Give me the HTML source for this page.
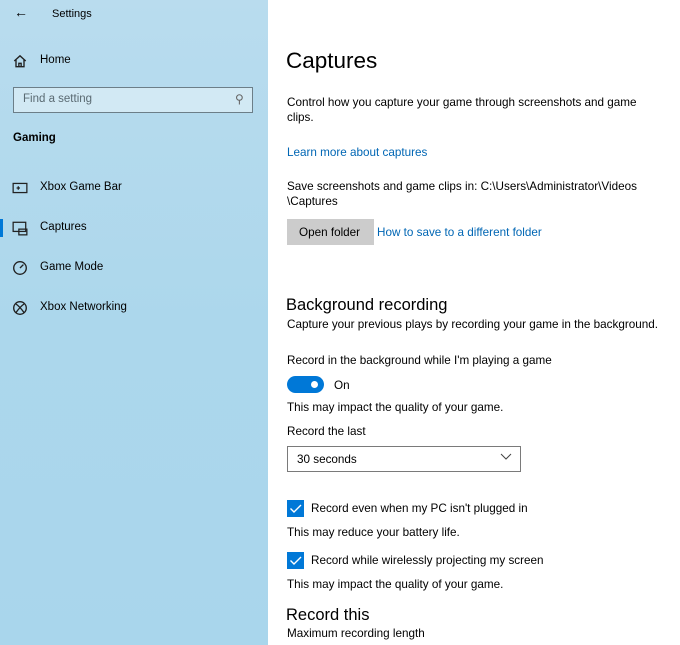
<!DOCTYPE html>
<html><head><style>
body{margin:0;width:680px;height:645px;overflow:hidden;font-family:"Liberation Sans",sans-serif;background:#fff;position:relative;color:#000}
.side{position:absolute;left:0;top:0;width:268px;height:645px;background:linear-gradient(180deg,#b9dcee 0%,#acd7ec 50%,#a9d6ec 100%)}
.t{position:absolute;white-space:nowrap}
.s{font-size:11.7px}
.side .t{font-size:11.5px}
a{color:#0066b4;text-decoration:none}
.ic{position:absolute;left:12px;width:16px;height:16px}
</style></head><body>
<div class="side">
<div class="t" style="left:14px;top:4px;font-size:14px">&#8592;</div>
<div class="t" style="left:52px;top:8px;font-size:11px">Settings</div>
<svg class="ic" style="top:53px" viewBox="0 0 14 14" fill="none" stroke="#222" stroke-width="1.2"><path d="M2 7L7 2.5 12 7M3.5 6v6h7V6M6 12V9h2v3"/></svg>
<div class="t" style="left:40px;top:54px">Home</div>
<div style="position:absolute;left:13px;top:87px;width:238px;height:24px;border:1.5px solid #6c7e88;background:#d2e9f4"></div>
<div class="t" style="left:23px;top:93px;color:#5a6a72">Find a setting</div>
<div class="t" style="left:235px;top:92px;color:#666;font-size:12px">&#9906;</div>
<div class="t" style="left:13px;top:132px;font-weight:bold">Gaming</div>
<svg class="ic" style="top:180px" viewBox="0 0 14 14" fill="none" stroke="#222" stroke-width="1.1"><rect x="1" y="3" width="12" height="8"/><path d="M4 7h3M5.5 5.5v3"/></svg>
<div class="t" style="left:40px;top:181px">Xbox Game Bar</div>
<div style="position:absolute;left:0;top:219px;width:3px;height:18px;background:#0078d7"></div>
<svg class="ic" style="top:220px" viewBox="0 0 14 14" fill="none" stroke="#222" stroke-width="1.1"><rect x="1" y="2" width="11" height="8"/><rect x="6" y="8" width="7" height="5"/></svg>
<div class="t" style="left:40px;top:221px">Captures</div>
<svg class="ic" style="top:260px" viewBox="0 0 14 14" fill="none" stroke="#222" stroke-width="1.2"><circle cx="7" cy="7" r="5.5"/><path d="M7 7l3-3"/></svg>
<div class="t" style="left:40px;top:261px">Game Mode</div>
<svg class="ic" style="top:300px" viewBox="0 0 14 14" fill="none" stroke="#222" stroke-width="1.2"><circle cx="7" cy="7" r="5.5"/><path d="M3.5 3.5Q7 6 10.5 11M10.5 3.5Q7 6 3.5 11"/></svg>
<div class="t" style="left:40px;top:301px">Xbox Networking</div>
</div>
<div class="t" style="left:286px;top:48px;font-size:22.5px">Captures</div>
<div class="t s" style="left:287px;top:95px;line-height:15px">Control how you capture your game through screenshots and game<br>clips.</div>
<div class="t s" style="left:287px;top:146px"><a>Learn more about captures</a></div>
<div class="t s" style="left:287px;top:179px;line-height:15px">Save screenshots and game clips in: C:\Users\Administrator\Videos<br>\Captures</div>
<div style="position:absolute;left:287px;top:219px;width:87px;height:26px;background:#cccccc"></div>
<div class="t s" style="left:299px;top:226px">Open folder</div>
<div class="t s" style="left:377px;top:226px"><a>How to save to a different folder</a></div>
<div class="t" style="left:286px;top:296px;font-size:16.5px">Background recording</div>
<div class="t s" style="left:287px;top:318px">Capture your previous plays by recording your game in the background.</div>
<div class="t s" style="left:287px;top:354px">Record in the background while I'm playing a game</div>
<div style="position:absolute;left:287px;top:376px;width:37px;height:17px;border-radius:9px;background:#0078d7"></div>
<div style="position:absolute;left:311px;top:381px;width:7px;height:7px;border-radius:50%;background:#fff"></div>
<div class="t s" style="left:334px;top:379px">On</div>
<div class="t s" style="left:287px;top:401px">This may impact the quality of your game.</div>
<div class="t s" style="left:287px;top:425px">Record the last</div>
<div style="position:absolute;left:287px;top:446px;width:232px;height:24px;border:1.5px solid #7a7a7a"></div>
<div class="t s" style="left:297px;top:453px">30 seconds</div>
<svg style="position:absolute;left:500px;top:453px" width="12" height="8" viewBox="0 0 12 8"><path d="M1 1l5 5 5-5" fill="none" stroke="#444" stroke-width="1"/></svg>
<div style="position:absolute;left:287px;top:500px;width:17px;height:17px;background:#0078d7"></div>
<svg style="position:absolute;left:287px;top:500px" width="17" height="17" viewBox="0 0 17 17"><path d="M3.5 8.5l3.5 3.5 7-7" fill="none" stroke="#fff" stroke-width="1.4"/></svg>
<div class="t s" style="left:311px;top:502px">Record even when my PC isn't plugged in</div>
<div class="t s" style="left:287px;top:526px">This may reduce your battery life.</div>
<div style="position:absolute;left:287px;top:552px;width:17px;height:17px;background:#0078d7"></div>
<svg style="position:absolute;left:287px;top:552px" width="17" height="17" viewBox="0 0 17 17"><path d="M3.5 8.5l3.5 3.5 7-7" fill="none" stroke="#fff" stroke-width="1.4"/></svg>
<div class="t s" style="left:311px;top:554px">Record while wirelessly projecting my screen</div>
<div class="t s" style="left:287px;top:578px">This may impact the quality of your game.</div>
<div class="t" style="left:286px;top:606px;font-size:16.5px">Record this</div>
<div class="t s" style="left:287px;top:627px">Maximum recording length</div>
</body></html>
